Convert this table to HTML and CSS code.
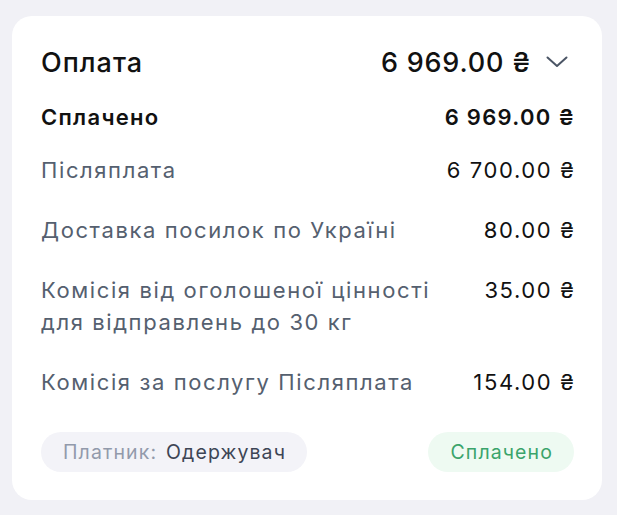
FILE: index.html
```html
<!DOCTYPE html>
<html lang="uk">
<head>
<meta charset="utf-8">
<link rel="stylesheet" href="styles.css">
</head>
<body>
<div class="card">
  <div class="head">
    <span class="title">Оплата</span>
    <span class="head-right">
      <span class="total">6 969.00 ₴</span>
      <svg class="chev" width="22" height="12" viewBox="0 0 22 12"><path d="M1.5 1.5 L11 10 L20.5 1.5" fill="none" stroke="#4b5565" stroke-width="2" stroke-linecap="round" stroke-linejoin="round"/></svg>
    </span>
  </div>
  <div class="row paid">
    <span class="label">Сплачено</span>
    <span class="amount">6 969.00 ₴</span>
  </div>
  <div class="row">
    <span class="label">Післяплата</span>
    <span class="amount">6 700.00 ₴</span>
  </div>
  <div class="row">
    <span class="label">Доставка посилок по Україні</span>
    <span class="amount">80.00 ₴</span>
  </div>
  <div class="row">
    <span class="label">Комісія від оголошеної цінності<br>для відправлень до 30 кг</span>
    <span class="amount">35.00 ₴</span>
  </div>
  <div class="row">
    <span class="label">Комісія за послугу Післяплата</span>
    <span class="amount">154.00 ₴</span>
  </div>
  <div class="foot">
    <span class="chip payer"><span class="muted">Платник:</span> Одержувач</span>
    <span class="chip status">Сплачено</span>
  </div>
</div>
</body>
</html>
```
FILE: styles.css
```css
html, body { margin: 0; padding: 0; }
body {
  background: #f1f1f6;
  font-family: Inter, "Noto Sans", sans-serif;
  color: #111;
  padding: 16px 15px 15px 12px;
}
.card {
  background: #fff;
  border-radius: 20px;
  padding: 28px 28px 28px 29px;
  width: 533px;
}
.head {
  display: flex;
  justify-content: space-between;
  align-items: center;
  height: 36px;
  margin-bottom: 21px;
}
.title { font-size: 27px; font-weight: 500; letter-spacing: 1px; }
.head-right { display: flex; align-items: center; gap: 15px; margin-right: 6px; }
.total { font-size: 27px; font-weight: 500; letter-spacing: 0.8px; }
.chev { display: block; }
.row {
  display: flex;
  justify-content: space-between;
  align-items: flex-start;
  font-size: 22px;
  line-height: 32px;
  letter-spacing: 1.6px;
  margin-bottom: 28px;
}
.row .label { color: #55606f; }
.row .amount { color: #111; margin-right: -1.6px; }
.row.paid { font-weight: 600; margin-bottom: 21px; letter-spacing: 1.3px; }
.row.paid .amount { margin-right: -1.3px; }
.row.paid .label { color: #111; }
.foot {
  display: flex;
  justify-content: space-between;
  margin-top: 34px;
}
.chip {
  height: 40px;
  border-radius: 20px;
  padding: 0 21px 0 22px;
  display: flex;
  align-items: center;
  font-size: 19.5px;
  letter-spacing: 1.1px;
}
.payer { background: #f3f3f8; color: #3d4555; }
.payer .muted { color: #929aab; margin-right: 9px; }
.status { background: #eefaf2; color: #3aa46b; }
```
